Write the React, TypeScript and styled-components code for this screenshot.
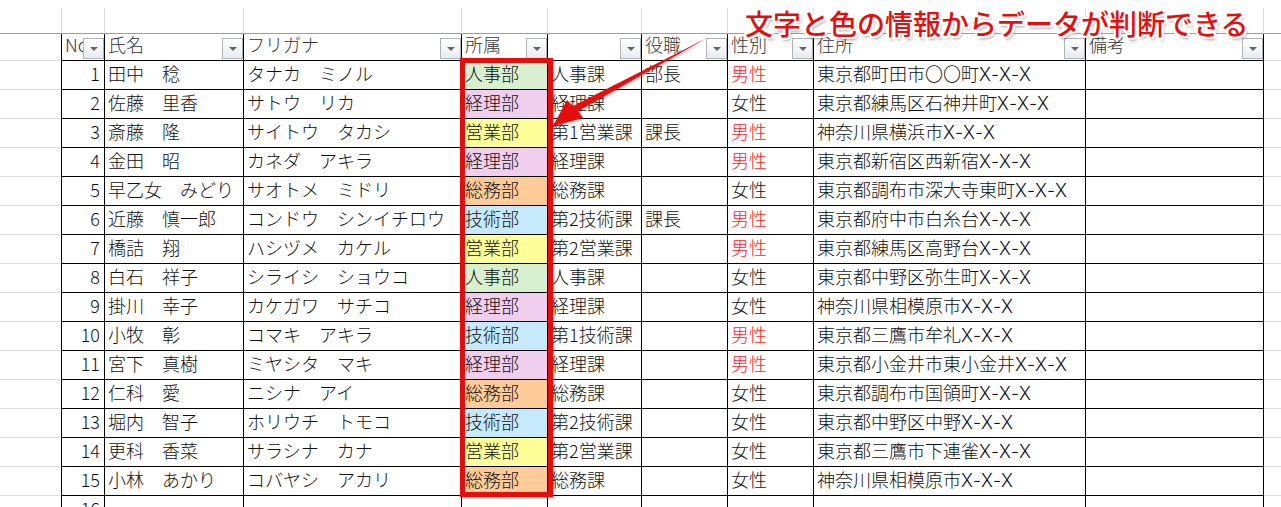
import React from "react";
import styled, { createGlobalStyle } from "styled-components";

const GlobalStyle = createGlobalStyle`
  html, body { margin: 0; padding: 0; background: #fff; }
  body { width: 1281px; height: 507px; overflow: hidden; }
`;

const COLUMNS = "61px 44px 139px 218px 86px 94px 86px 86px 272px 178px 17px";

const Page = styled.div`
  position: relative;
  width: 1281px;
  height: 507px;
  overflow: hidden;
  padding-top: 8px;
  box-sizing: border-box;
  font-family: "Noto Sans CJK JP", "Noto Sans", sans-serif;
  font-weight: 300;
  font-size: 18px;
  color: #111;
`;

const Grid = styled.div`
  display: grid;
  grid-template-columns: ${COLUMNS};
  grid-template-rows: 26px 27px repeat(16, 29px);
`;

const Gutter = styled.div<{ $strong?: boolean }>`
  border-bottom: 1px solid ${(p) => (p.$strong ? "#9e9e9e" : "#dcdcdc")};
`;

const TopCell = styled.div<{ $line?: boolean; $first?: boolean }>`
  box-sizing: border-box;
  border-bottom: 1px solid #9e9e9e;
  border-right: ${(p) => (p.$line ? "1px solid #dcdcdc" : "none")};
  border-left: ${(p) => (p.$first ? "1px solid #dcdcdc" : "none")};
`;

const Cell = styled.div<{ $first?: boolean; $bg?: string; $red?: boolean; $num?: boolean }>`
  position: relative;
  box-sizing: border-box;
  border-right: 1px solid #000;
  border-bottom: 1px solid #000;
  border-left: ${(p) => (p.$first ? "1px solid #000" : "none")};
  padding: 0 ${(p) => (p.$num ? "4px" : "3px")} 0 3px;
  line-height: 25px;
  white-space: nowrap;
  overflow: hidden;
  background: ${(p) => p.$bg ?? "transparent"};
  color: ${(p) => (p.$red ? "#ff1a1a" : "inherit")};
  text-align: ${(p) => (p.$num ? "right" : "left")};
`;

const HeadCell = styled(Cell)`
  line-height: 20px;
  color: #333;
`;

const Lot = styled.span`
  font-family: Inter, "Noto Sans", sans-serif;
  letter-spacing: 0.6px;
`;

const FilterButton = styled.div`
  position: absolute;
  right: 0;
  top: 4px;
  width: 21px;
  height: 21px;
  box-sizing: border-box;
  border: 1px solid #aeb4ba;
  background: linear-gradient(#ffffff, #e9ecef);
  display: flex;
  align-items: center;
  justify-content: center;
  &::after {
    content: "";
    border-left: 4px solid transparent;
    border-right: 4px solid transparent;
    border-top: 4px solid #666;
  }
`;

const Outline = styled.div`
  position: absolute;
  left: 460px;
  top: 58px;
  width: 93px;
  height: 439px;
  box-sizing: border-box;
  border: 5px solid #e30f0f;
  box-shadow: 1px 1px 2px rgba(0, 0, 0, 0.35);
  pointer-events: none;
`;

const ArrowLayer = styled.svg`
  position: absolute;
  left: 0;
  top: 0;
  pointer-events: none;
  filter: drop-shadow(1px 1px 1px rgba(0, 0, 0, 0.35));
`;

const Callout = styled.div`
  position: absolute;
  left: 745px;
  top: 3px;
  font-size: 28px;
  line-height: 40px;
  font-weight: 500;
  white-space: nowrap;
  color: #e30f0f;
  text-shadow: -2px 0 0 #fff, 2px 0 0 #fff, 0 -2px 0 #fff, 0 2px 0 #fff,
    -2px -2px 0 #fff, 2px -2px 0 #fff, -2px 2px 0 #fff, 2px 2px 0 #fff,
    2px 3px 3px rgba(0, 0, 0, 0.4);
`;

const DEPT: Record<string, string> = {
  人事部: "#d8f0d0",
  経理部: "#f0ceee",
  営業部: "#ffff99",
  総務部: "#ffcc99",
  技術部: "#c6e9fb",
};

const HEADERS = ["No", "氏名", "フリガナ", "所属", "", "役職", "性別", "住所", "備考"];

const ROWS = [
  ["田中　稔", "タナカ　ミノル", "人事部", "人事課", "部長", "男性", "東京都町田市〇〇町"],
  ["佐藤　里香", "サトウ　リカ", "経理部", "経理課", "", "女性", "東京都練馬区石神井町"],
  ["斎藤　隆", "サイトウ　タカシ", "営業部", "第1営業課", "課長", "男性", "神奈川県横浜市"],
  ["金田　昭", "カネダ　アキラ", "経理部", "経理課", "", "男性", "東京都新宿区西新宿"],
  ["早乙女　みどり", "サオトメ　ミドリ", "総務部", "総務課", "", "女性", "東京都調布市深大寺東町"],
  ["近藤　慎一郎", "コンドウ　シンイチロウ", "技術部", "第2技術課", "課長", "男性", "東京都府中市白糸台"],
  ["橋詰　翔", "ハシヅメ　カケル", "営業部", "第2営業課", "", "男性", "東京都練馬区高野台"],
  ["白石　祥子", "シライシ　ショウコ", "人事部", "人事課", "", "女性", "東京都中野区弥生町"],
  ["掛川　幸子", "カケガワ　サチコ", "経理部", "経理課", "", "女性", "神奈川県相模原市"],
  ["小牧　彰", "コマキ　アキラ", "技術部", "第1技術課", "", "男性", "東京都三鷹市牟礼"],
  ["宮下　真樹", "ミヤシタ　マキ", "経理部", "経理課", "", "男性", "東京都小金井市東小金井"],
  ["仁科　愛", "ニシナ　アイ", "総務部", "総務課", "", "女性", "東京都調布市国領町"],
  ["堀内　智子", "ホリウチ　トモコ", "技術部", "第2技術課", "", "女性", "東京都中野区中野"],
  ["更科　香菜", "サラシナ　カナ", "営業部", "第2営業課", "", "女性", "東京都三鷹市下連雀"],
  ["小林　あかり", "コバヤシ　アカリ", "総務部", "総務課", "", "女性", "神奈川県相模原市"],
];

export default function App() {
  return (
    <Page>
      <GlobalStyle />
      <Grid>
        <Gutter $strong />
        {HEADERS.map((_, i) => (
          <TopCell key={i} $line $first={i === 0} />
        ))}
        <TopCell />

        <Gutter />
        {HEADERS.map((h, i) => (
          <HeadCell key={h + i} $first={i === 0}>
            {h}
            <FilterButton />
          </HeadCell>
        ))}
        <Gutter />

        {ROWS.map((r, i) => (
          <React.Fragment key={i}>
            <Gutter />
            <Cell $first $num>{i + 1}</Cell>
            <Cell>{r[0]}</Cell>
            <Cell>{r[1]}</Cell>
            <Cell $bg={DEPT[r[2]]}>{r[2]}</Cell>
            <Cell>{r[3]}</Cell>
            <Cell>{r[4]}</Cell>
            <Cell $red={r[5] === "男性"}>{r[5]}</Cell>
            <Cell>
              {r[6]}
              <Lot>X-X-X</Lot>
            </Cell>
            <Cell />
            <Gutter />
          </React.Fragment>
        ))}

        <Gutter />
        <Cell $first $num>16</Cell>
        <Cell />
        <Cell />
        <Cell />
        <Cell />
        <Cell />
        <Cell />
        <Cell />
        <Cell />
        <Gutter />
      </Grid>

      <Outline />
      <ArrowLayer width="1281" height="507">
        <path d="M707 38 L578 111 L583 118 L553 126 L567 100 L573 106 Z" fill="#e30f0f" />
      </ArrowLayer>
      <Callout>文字と色の情報からデータが判断できる</Callout>
    </Page>
  );
}
